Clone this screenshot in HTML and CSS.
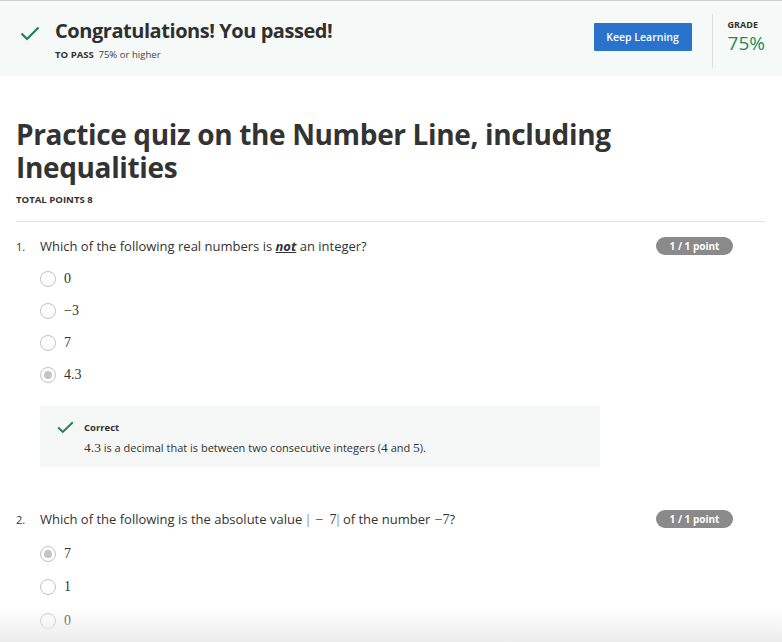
FILE: index.html
```html
<!DOCTYPE html>
<html>
<head>
<meta charset="utf-8">
<link rel="stylesheet" href="styles.css">
</head>
<body>
<div class="banner">
  <div class="banner-left">
    <svg class="check-big" width="20" height="15" viewBox="0 0 20 15"><path d="M1.5 7.5 L7 13 L18.5 1.5" fill="none" stroke="#1f8354" stroke-width="2.2"/></svg>
    <div class="banner-text">
      <div class="banner-title">Congratulations! You passed!</div>
      <div class="banner-sub"><span class="label">TO PASS</span> 75% or higher</div>
    </div>
  </div>
  <div class="banner-right">
    <button class="btn">Keep Learning</button>
    <div class="divider"></div>
    <div class="grade">
      <div class="label">GRADE</div>
      <div class="grade-value">75%</div>
    </div>
  </div>
</div>

<div class="content">
  <h1 class="title">Practice quiz on the Number Line, including Inequalities</h1>
  <div class="label total">TOTAL POINTS 8</div>
  <div class="rule"></div>

  <div class="question">
    <div class="q-row">
      <span class="q-num">1.</span>
      <span class="q-text">Which of the following real numbers is <b class="em"><i><u>not</u></i></b> an integer?</span>
      <span class="badge">1 / 1 point</span>
    </div>
    <div class="options">
      <div class="opt"><span class="radio"></span><span class="math">0</span></div>
      <div class="opt"><span class="radio"></span><span class="math">−3</span></div>
      <div class="opt"><span class="radio"></span><span class="math">7</span></div>
      <div class="opt"><span class="radio checked"></span><span class="math">4.3</span></div>
    </div>
    <div class="feedback">
      <svg class="check-small" width="17" height="13" viewBox="0 0 17 13"><path d="M1.2 6.5 L5.8 11 L15.8 1.2" fill="none" stroke="#1f8354" stroke-width="1.9"/></svg>
      <div class="fb-text">
        <div class="fb-title">Correct</div>
        <div class="fb-body"><span class="math">4.3</span> is a decimal that is between two consecutive integers (<span class="math">4</span> and <span class="math">5</span>).</div>
      </div>
    </div>
  </div>

  <div class="question q2">
    <div class="q-row">
      <span class="q-num">2.</span>
      <span class="q-text">Which of the following is the absolute value <span class="math abs"><span class="bar">|</span><span class="minus">−</span>7<span class="bar">|</span></span> of the number <span class="math">−7</span>?</span>
      <span class="badge">1 / 1 point</span>
    </div>
    <div class="options">
      <div class="opt"><span class="radio checked"></span><span class="math">7</span></div>
      <div class="opt"><span class="radio"></span><span class="math">1</span></div>
      <div class="opt"><span class="radio"></span><span class="math">0</span></div>
    </div>
  </div>
</div>
<div class="fade"></div>
</body>
</html>
```

FILE: styles.css
```css
html, body {
  margin: 0;
  padding: 0;
  background: #fff;
  font-family: "Open Sans", "DejaVu Sans", sans-serif;
  color: #333;
  overflow: hidden;
  height: 642px;
}

.banner {
  display: flex;
  align-items: center;
  justify-content: space-between;
  height: 75px;
  background: #f5f9f8;
  border-top: 1px solid #cfcfcf;
  padding: 0 17px 0 20px;
}

.banner-left {
  display: flex;
  align-items: flex-start;
  padding-top: 2px;
}

.check-big {
  margin-top: 8px;
  margin-right: 15px;
}

.banner-title {
  font-size: 20px;
  font-weight: 700;
  letter-spacing: -0.45px;
  line-height: 26px;
  color: #2f2f2f;
}

.banner-sub {
  font-size: 9.6px;
  line-height: 14px;
  margin-top: 4px;
  color: #444;
}

.label {
  font-weight: 700;
  font-size: 9.6px;
  color: #333;
  margin-right: 2px;
}

.banner-right {
  display: flex;
  align-items: center;
}

.btn {
  width: 98px;
  height: 28px;
  background: #2a73cc;
  color: #fff;
  border: 0;
  border-radius: 1px;
  font-family: "Open Sans", sans-serif;
  font-size: 10.5px;
  font-weight: 600;
  padding: 0;
  margin-right: 20px;
  margin-top: -3px;
}

.divider {
  width: 1px;
  height: 54px;
  background: #dcdfde;
  margin-right: 15px;
  margin-top: 4px;
}

.grade {
  margin-top: -4px;
}

.grade .label {
  display: block;
  line-height: 12px;
  font-size: 9px;
}

.grade-value {
  font-size: 19px;
  line-height: 24px;
  color: #248a57;
}

.content {
  padding: 0 17px 0 16px;
}

.title {
  font-size: 28px;
  font-weight: 700;
  letter-spacing: -0.35px;
  line-height: 33px;
  margin: 42px 0 0 0;
  color: #333;
  width: 620px;
}

.total {
  display: block;
  margin-top: 10px;
  line-height: 12px;
}

.rule {
  height: 1px;
  background: #e0e0e0;
  margin-top: 15px;
}

.question {
  margin-top: 15px;
}

.q2 {
  margin-top: 43px;
}

.q-row {
  display: flex;
  align-items: center;
  height: 18px;
  font-size: 13px;
}

.q-num {
  width: 24px;
  font-size: 11px;
  color: #333;
}

.q-text {
  flex: 1;
  color: #333;
}

.em {
  font-weight: 700;
}

.badge {
  width: 77px;
  height: 18px;
  border-radius: 9px;
  background: #8a8a8a;
  color: #fff;
  font-size: 10px;
  font-weight: 700;
  line-height: 18px;
  text-align: center;
  margin-right: 32px;
}

.options {
  margin-top: 8px;
  padding-left: 24px;
}

.q2 .options {
  margin-top: 9px;
}

.opt {
  display: flex;
  align-items: center;
  height: 32px;
}

.q2 .opt {
  height: 33.5px;
}

.radio {
  box-sizing: border-box;
  width: 16px;
  height: 16px;
  border: 1.5px solid #c2c2c2;
  border-radius: 50%;
  margin-right: 8px;
  display: flex;
  align-items: center;
  justify-content: center;
  background: #fff;
}

.radio.checked::after {
  content: "";
  width: 8px;
  height: 8px;
  border-radius: 50%;
  background: #c4c4c4;
}

.math {
  font-family: "Liberation Serif", "DejaVu Serif", serif;
  font-size: 14px;
  color: #333;
}

.abs .bar {
  color: #777;
  font-size: 15px;
}

.abs .minus {
  margin: 0 6px 0 6px;
}

.q2 .q-text > .math {
  margin-left: 1px;
}

.feedback {
  display: flex;
  align-items: flex-start;
  width: 560px;
  height: 61px;
  box-sizing: border-box;
  margin: 15px 0 0 24px;
  background: #f4f7f6;
  padding: 15px 0 0 17px;
}

.check-small {
  margin-top: 0;
  margin-right: 10px;
}

.fb-title {
  font-size: 9.5px;
  font-weight: 700;
  line-height: 14px;
  color: #333;
}

.fb-body {
  font-size: 11px;
  line-height: 16px;
  margin-top: 5px;
  color: #333;
}

.fb-body .math {
  font-size: 13.5px;
}

.fade {
  position: absolute;
  left: 0;
  right: 0;
  bottom: 0;
  height: 34px;
  background: linear-gradient(to bottom, rgba(236,236,236,0), rgba(236,236,236,1));
  pointer-events: none;
}
```
